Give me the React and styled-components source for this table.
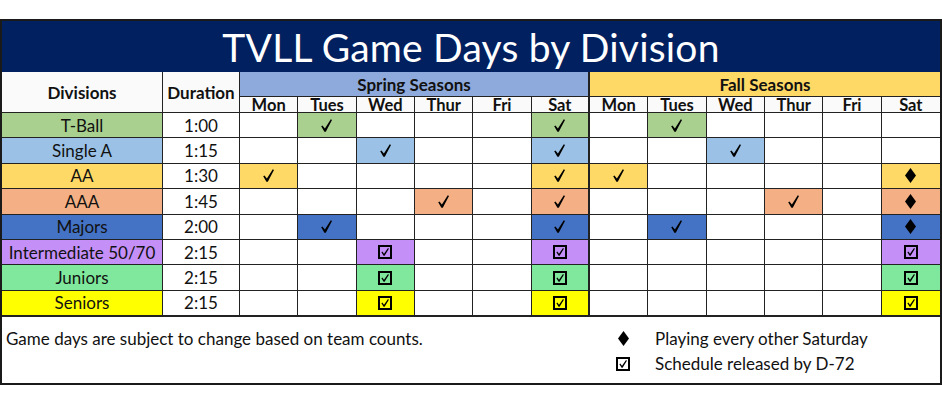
import React from "react";
import styled, { createGlobalStyle } from "styled-components";

const DAYS = ["Mon", "Tues", "Wed", "Thur", "Fri", "Sat"];

const divisions = [
  { name: "T-Ball", time: "1:00", color: "#A9D08E", spring: { Tues: "check", Sat: "check" }, fall: { Tues: "check" } },
  { name: "Single A", time: "1:15", color: "#9BC2E6", spring: { Wed: "check", Sat: "check" }, fall: { Wed: "check" } },
  { name: "AA", time: "1:30", color: "#FFD966", spring: { Mon: "check", Sat: "check" }, fall: { Mon: "check", Sat: "diamond" } },
  { name: "AAA", time: "1:45", color: "#F4B084", spring: { Thur: "check", Sat: "check" }, fall: { Thur: "check", Sat: "diamond" } },
  { name: "Majors", time: "2:00", color: "#4472C4", spring: { Tues: "check", Sat: "check" }, fall: { Tues: "check", Sat: "diamond" } },
  { name: "Intermediate 50/70", time: "2:15", color: "#C490F7", spring: { Wed: "box", Sat: "box" }, fall: { Sat: "box" } },
  { name: "Juniors", time: "2:15", color: "#80E89C", spring: { Wed: "box", Sat: "box" }, fall: { Sat: "box" } },
  { name: "Seniors", time: "2:15", color: "#FFFF00", spring: { Wed: "box", Sat: "box" }, fall: { Sat: "box" } },
];

function Check() {
  return (
    <svg width="11" height="13" viewBox="0 0 11 13">
      <path d="M0.2 7.3 L1.4 6.5 L3.9 9.6 L9.8 0.2 L11 0.9 L4.8 12.8 L3.4 12.8 Z" fill="#000" />
    </svg>
  );
}

function Box() {
  return (
    <svg width="14" height="14" viewBox="0 0 14 14">
      <rect x="1" y="1" width="12" height="12" fill="none" stroke="#000" strokeWidth="2" />
      <path d="M3.4 7.2 L4.3 6.5 L6 8.7 L10 3.1 L10.9 3.8 L6.6 10.7 L5.6 10.7 Z" fill="#000" />
    </svg>
  );
}

function Diamond() {
  return (
    <svg width="11" height="15" viewBox="0 0 11 15">
      <polygon points="5.5,0 11,7.5 5.5,15 0,7.5" fill="#000" />
    </svg>
  );
}

const marks = { check: Check, box: Box, diamond: Diamond };

function Mark({ type }) {
  const Icon = marks[type];
  return Icon ? <Icon /> : null;
}

export default function App() {
  return (
    <>
      <GlobalStyle />
      <Sheet>
        <Title>TVLL Game Days by Division</Title>

        <HeadCell $rows={2}>Divisions</HeadCell>
        <HeadCell $rows={2}>Duration</HeadCell>
        <Band $bg="#8EA9DB" $thick>Spring Seasons</Band>
        <Band $bg="#FFD966" $last>Fall Seasons</Band>

        {["spring", "fall"].map((season) =>
          DAYS.map((d) => (
            <DayCell key={season + d} $thick={season === "spring" && d === "Sat"} $last={season === "fall" && d === "Sat"}>
              {d}
            </DayCell>
          ))
        )}

        {divisions.map((row) => (
          <React.Fragment key={row.name}>
            <Cell $bg={row.color}>{row.name}</Cell>
            <Cell>{row.time}</Cell>
            {["spring", "fall"].map((season) =>
              DAYS.map((d) => {
                const mark = row[season][d];
                return (
                  <Cell
                    key={season + d}
                    $bg={mark ? row.color : "#fff"}
                    $thick={season === "spring" && d === "Sat"}
                    $last={season === "fall" && d === "Sat"}
                  >
                    {mark && <Mark type={mark} />}
                  </Cell>
                );
              })
            )}
          </React.Fragment>
        ))}

        <Footer>
          <Note>Game days are subject to change based on team counts.</Note>
          <Legend>
            <Symbol><Diamond /></Symbol>
            <span>Playing every other Saturday</span>
            <Symbol><Box /></Symbol>
            <span>Schedule released by D-72</span>
          </Legend>
        </Footer>
      </Sheet>
    </>
  );
}

const GlobalStyle = createGlobalStyle`
  body {
    margin: 0;
    background: #fff;
    font-family: Lato, "Liberation Sans", sans-serif;
    color: #111;
  }
`;

const Sheet = styled.div`
  box-sizing: border-box;
  width: 942px;
  margin-top: 19px;
  border: 2px solid #1a1a1a;
  display: grid;
  grid-template-columns: 161px 77px repeat(12, 1fr);
  grid-template-rows: 51px 25px 16px repeat(8, 25.4px) 67px;
`;

const Title = styled.div`
  grid-column: 1 / -1;
  background: #002060;
  color: #fff;
  font-size: 39px;
  display: flex;
  align-items: center;
  justify-content: center;
  letter-spacing: 0.2px;
`;

const Cell = styled.div`
  box-sizing: border-box;
  background: ${(p) => p.$bg || "#fff"};
  border-bottom: 1px solid #222;
  border-right: ${(p) => (p.$last ? "none" : p.$thick ? "2px solid #222" : "1px solid #222")};
  display: flex;
  align-items: center;
  justify-content: center;
  font-size: 17px;
  white-space: nowrap;
`;

const HeadCell = styled(Cell)`
  grid-row: span ${(p) => p.$rows};
  background: #fafafa;
  font-weight: 700;
`;

const Band = styled(Cell)`
  grid-column: span 6;
  background: ${(p) => p.$bg};
  font-weight: 700;
`;

const DayCell = styled(Cell)`
  background: #fafafa;
  font-weight: 700;
  font-size: 16.5px;
  line-height: 16px;
  overflow: visible;
`;

const Footer = styled.div`
  grid-column: 1 / -1;
  border-top: 1px solid #222;
  display: grid;
  grid-template-columns: 611px 1fr;
  padding-top: 9px;
  font-size: 17px;
  line-height: 25px;
`;

const Note = styled.div`
  padding-left: 4px;
`;

const Legend = styled.div`
  display: grid;
  grid-template-columns: 20px 1fr;
  grid-auto-rows: 25px;
  column-gap: 22px;
  align-items: center;
`;

const Symbol = styled.span`
  display: flex;
  justify-content: center;
`;
